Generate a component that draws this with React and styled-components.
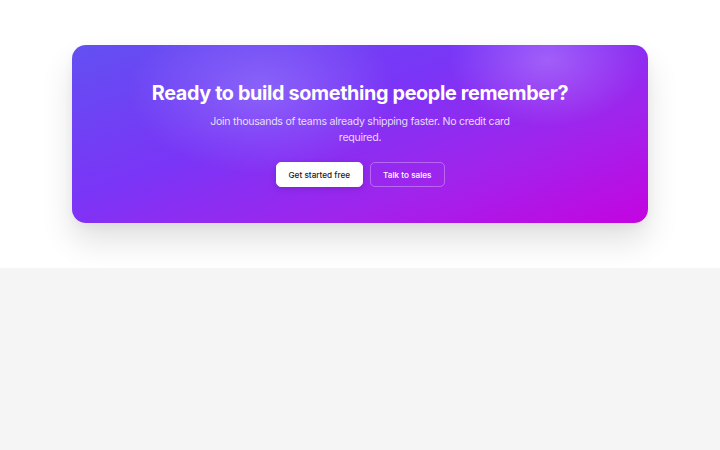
import React from "react";
import styled, { createGlobalStyle } from "styled-components";

const Global = createGlobalStyle`
  html, body { margin: 0; padding: 0; background: #f5f5f5; }
  body { font-family: Inter, "Noto Sans", sans-serif; -webkit-font-smoothing: antialiased; }
`;

const Section = styled.section`
  background: #ffffff;
  padding: 45px 72px;
`;

const Card = styled.div`
  height: 178px;
  box-sizing: border-box;
  border-radius: 14px;
  padding-top: 34px;
  display: flex;
  flex-direction: column;
  align-items: center;
  color: #fff;
  background:
    radial-gradient(ellipse 190px 120px at 190px 45px, rgba(170, 150, 255, 0.42), rgba(170, 150, 255, 0) 70%),
    radial-gradient(ellipse 140px 95px at 475px 15px, rgba(190, 140, 255, 0.5), rgba(190, 140, 255, 0) 70%),
    linear-gradient(160deg, #6250f2 0%, #7a35f6 40%, #a024ec 70%, #c404e0 100%);
  box-shadow: 0 18px 32px rgba(0, 0, 0, 0.12), 0 4px 10px rgba(0, 0, 0, 0.04);
`;

const Title = styled.h2`
  margin: 0;
  font-size: 19.8px;
  font-weight: 700;
  letter-spacing: -0.35px;
  line-height: 28px;
`;

const Lead = styled.p`
  margin: 7px 0 0;
  max-width: 308px;
  text-align: center;
  font-size: 10.6px;
  letter-spacing: -0.28px;
  line-height: 16px;
  font-weight: 400;
  color: rgba(255, 255, 255, 0.82);
`;

const Actions = styled.div`
  display: flex;
  gap: 7px;
  margin-top: 16px;
`;

const Button = styled.button`
  height: 25px;
  padding: 0 12px;
  border-radius: 5px;
  font-family: inherit;
  font-size: 8.2px;
  font-weight: 500;
  cursor: pointer;
  border: 1px solid ${(p) => (p.$primary ? "#ffffff" : "rgba(255,255,255,0.3)")};
  background: ${(p) => (p.$primary ? "#ffffff" : "transparent")};
  color: ${(p) => (p.$primary ? "#1c1a22" : "#ffffff")};
  box-shadow: ${(p) => (p.$primary ? "0 2px 6px rgba(40,0,90,0.18)" : "none")};
`;

export default function App() {
  return (
    <>
      <Global />
      <Section>
        <Card>
          <Title>Ready to build something people remember?</Title>
          <Lead>Join thousands of teams already shipping faster. No credit card required.</Lead>
          <Actions>
            <Button $primary>Get started free</Button>
            <Button>Talk to sales</Button>
          </Actions>
        </Card>
      </Section>
    </>
  );
}
